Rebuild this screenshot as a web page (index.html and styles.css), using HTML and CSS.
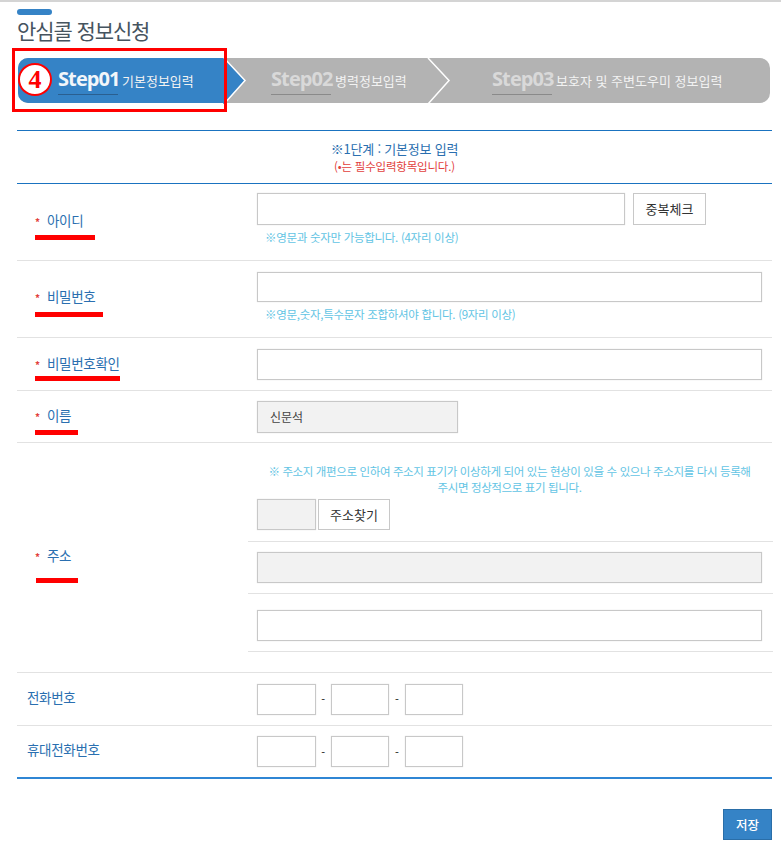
FILE: index.html
```html
<!DOCTYPE html>
<html lang="ko">
<head>
<meta charset="utf-8">
<title>안심콜 정보신청</title>
<link rel="stylesheet" href="styles.css">
</head>
<body>
<div class="page">
  <div class="title-mark"></div>
  <h1 class="title">안심콜 정보신청</h1>

  <div class="steps">
    <div class="step step-1">
      <span class="step-no">Step01</span><span class="step-label">기본정보입력</span>
      <svg class="chev chev-blue" width="24" height="46" viewBox="0 0 24 46"><path d="M1 0 L22 22.500 L1 46 L0 46 L0 0 Z" fill="#3583c6"/><path d="M1 0 L22 22.500 L1 46" fill="none" stroke="#fff" stroke-width="1.500"/></svg>
    </div>
    <div class="step step-2">
      <span class="step-no">Step02</span><span class="step-label">병력정보입력</span>
      <svg class="chev" width="24" height="46" viewBox="0 0 24 46"><path d="M1 0 L22 22.500 L1 46" fill="none" stroke="#fff" stroke-width="1.500"/></svg>
    </div>
    <div class="step step-3">
      <span class="step-no">Step03</span><span class="step-label">보호자 및 주변도우미 정보입력</span>
    </div>
    <div class="callout"></div>
    <div class="callout-num">4</div>
  </div>

  <div class="form">
    <div class="form-head">
      <p class="head-main">※1단계 : 기본정보 입력</p>
      <p class="head-sub">(•는 필수입력항목입니다.)</p>
    </div>

    <div class="row row-id">
      <div class="label req">아이디<i class="ul ul-id"></i></div>
      <div class="field field-id">
        <div class="line"><input class="input w-368" type="text"><button class="btn btn-check" type="button">중복체크</button></div>
        <p class="hint">※영문과 숫자만 가능합니다. (4자리 이상)</p>
      </div>
    </div>

    <div class="row row-pw">
      <div class="label req">비밀번호<i class="ul ul-pw"></i></div>
      <div class="field field-pw">
        <input class="input w-full h-30" type="password">
        <p class="hint">※영문,숫자,특수문자 조합하셔야 합니다. (9자리 이상)</p>
      </div>
    </div>

    <div class="row row-pw2">
      <div class="label req">비밀번호확인<i class="ul ul-pw2"></i></div>
      <div class="field"><input class="input w-full h-31" type="password"></div>
    </div>

    <div class="row row-name">
      <div class="label req">이름<i class="ul ul-name"></i></div>
      <div class="field"><input class="input input-off w-201" type="text" value="신문석" readonly></div>
    </div>

    <div class="row row-addr">
      <div class="label req">주소<i class="ul ul-addr"></i></div>
      <div class="addr">
        <div class="addr-row addr-top">
          <p class="addr-note">※ 주소지 개편으로 인하여 주소지 표기가 이상하게 되어 있는 현상이 있을 수 있으나 주소지를 다시 등록해<br>주시면 정상적으로 표기 됩니다.</p>
          <div class="line line-zip"><input class="input input-off w-59 h-31" type="text" readonly><button class="btn btn-zip" type="button">주소찾기</button></div>
        </div>
        <div class="addr-row addr-mid"><input class="input input-off w-full h-31" type="text" readonly></div>
        <div class="addr-row addr-end"><input class="input w-full h-31" type="text"></div>
      </div>
    </div>

    <div class="row row-tel">
      <div class="label">전화번호</div>
      <div class="field tel">
        <input class="input w-tel h-31" type="text"><span class="dash">-</span><input class="input w-tel h-31" type="text"><span class="dash">-</span><input class="input w-tel h-31" type="text">
      </div>
    </div>

    <div class="row row-tel row-last">
      <div class="label">휴대전화번호</div>
      <div class="field tel">
        <input class="input w-tel h-31" type="text"><span class="dash">-</span><input class="input w-tel h-31" type="text"><span class="dash">-</span><input class="input w-tel h-31" type="text">
      </div>
    </div>
  </div>

  <div class="actions"><button class="save" type="button">저장</button></div>
</div>
</body>
</html>
```

FILE: styles.css
```css
* { box-sizing: border-box; }
html, body { margin: 0; padding: 0; background: #fff; }
body {
  font-family: "Noto Sans CJK KR", "Noto Sans", sans-serif;
  color: #333;
  border-top: 2px solid #d4d4d4;
  overflow: hidden;
  height: 844px;
}
p { margin: 0; }
.page { width: 755px; margin-left: 17px; }

.title-mark { width: 35px; height: 6px; margin-top: 7px; background: #3583c6; border-radius: 3px; }
.title {
  margin: -1px 0 0;
  height: 34px;
  font-size: 21px;
  line-height: 32px;
  font-weight: 400;
  color: #46545f;
  letter-spacing: -1.1px;
}

.steps {
  position: relative;
  display: flex;
  width: 752px;
  height: 45px;
  margin: 10px 0 0 1px;
  background: #b3b3b3;
  border-radius: 10px;
}
.step { position: relative; display: flex; align-items: center; height: 45px; }
.step-1 { width: 207px; padding-left: 40px; background: #3583c6; border-radius: 10px 0 0 10px; }
.step-2 { width: 204px; padding-left: 46px; }
.step-3 { flex: 1; padding-left: 63px; }
.step-no {
  width: 60px;
  padding-bottom: 3px;
  border-bottom: 1px solid #8a8a8a;
  font-family: "Open Sans", "Noto Sans", sans-serif;
  font-size: 20px;
  line-height: 25px;
  font-weight: 700;
  letter-spacing: -0.9px;
  color: #d9d9d9;
}
.step-1 .step-no { color: #f2f6fa; border-bottom-color: #2a5f90; }
.step-label {
  margin-left: 4px;
  font-size: 13px;
  line-height: 20px;
  letter-spacing: 0;
  color: #f2f2f2;
  white-space: nowrap;
}
.chev { position: absolute; right: -22px; top: 0; }

.callout {
  position: absolute;
  left: -6px;
  top: -10px;
  width: 215px;
  height: 64px;
  border: 3px solid #f00;
}
.callout-num {
  position: absolute;
  left: 0;
  top: 5px;
  width: 34px;
  height: 33px;
  border: 2px solid #f00;
  border-radius: 50%;
  background: #fff;
  color: #f00;
  font-family: "Liberation Serif", serif;
  font-size: 26px;
  line-height: 29px;
  font-weight: 700;
  text-align: center;
}

.form { margin-top: 27px; border-top: 1px solid #1a73c0; }
.form-head { height: 53px; padding-top: 9px; text-align: center; border-bottom: 1px solid #1a73c0; }
.head-main { font-size: 13px; line-height: 18px; font-weight: 400; color: #2a6fb0; letter-spacing: -0.2px; }
.head-sub { font-size: 11.500px; line-height: 16px; color: #e2403c; letter-spacing: -0.2px; }

.row { display: flex; align-items: center; border-bottom: 1px solid #e2e2e2; }
.row-id { height: 77px; }
.row-pw { height: 77px; }
.row-pw2 { height: 53px; }
.row-name { height: 52px; }
.row-addr { height: 230px; }
.row-tel { height: 53px; }
.row-last { height: 53px; border-bottom: 2px solid #2f86d4; }

.label {
  position: relative;
  width: 240px;
  flex: none;
  padding-left: 10px;
  font-size: 13.500px;
  line-height: 20px;
  color: #2a6fb0;
  letter-spacing: -0.3px;
}
.label.req { padding-left: 30px; }
.label.req::before {
  content: "*";
  position: absolute;
  left: 18px;
  top: 2px;
  font-size: 10px;
  font-weight: 700;
  color: #e2403c;
}
.row-id .label, .row-name .label, .row-tel .label { padding-bottom: 4px; }
.row-pw .label, .row-addr .label { padding-bottom: 6px; }
.row-pw2 .label { padding-bottom: 2px; }
.row-last .label { padding-bottom: 6px; }

.ul { position: absolute; left: 18px; height: 5px; background: #f00; }
.ul-id { top: 25px; width: 60px; }
.ul-pw { top: 26px; width: 68px; }
.ul-pw2 { top: 23px; width: 85px; }
.ul-name { top: 25px; width: 43px; }
.ul-addr { top: 33px; width: 42px; left: 19px; }

.field { flex: 1; }
.field-id { align-self: flex-start; padding-top: 9px; }
.field-pw { align-self: flex-start; padding-top: 11px; }
.line { display: flex; }
.input {
  display: block;
  height: 32px;
  padding: 0 12px;
  border: 1px solid #c8c8c8;
  box-shadow: 0 0 1px #d8d8d8;
  background: #fff;
  font: 12px/20px "Noto Sans CJK KR", sans-serif;
  color: #444;
  outline: none;
}
.input-off { background: #f2f2f2; }
.w-368 { width: 368px; }
.w-full { width: 505px; }
.w-201 { width: 201px; }
.w-59 { width: 59px; padding: 0; }
.w-tel { width: 58.500px; padding: 0; }
.h-30 { height: 30px; }
.h-31 { height: 31px; }

.btn {
  height: 32px;
  padding: 0;
  border: 1px solid #c8c8c8;
  background: #fff;
  font: 13px/20px "Noto Sans CJK KR", sans-serif;
  color: #333;
  letter-spacing: 0;
}
.btn-check { width: 73px; margin-left: 8px; }
.hint { margin-top: 4px; padding-left: 8px; font-size: 11.500px; line-height: 17px; color: #62c4e4; letter-spacing: -0.3px; }

.addr { width: 525px; flex: none; margin-left: -9px; align-self: flex-start; }
.addr-row { padding-left: 9px; padding-right: 10px; border-bottom: 1px solid #e2e2e2; }
.addr-top { height: 99px; padding-top: 20px; }
.addr-mid { height: 52px; padding-top: 10px; }
.addr-end { height: 58px; padding-top: 16px; }
.addr-note { width: 505px; font-size: 11.500px; line-height: 16px; text-align: center; color: #62c4e4; letter-spacing: -0.38px; }
.line-zip { margin-top: 4px; }
.btn-zip { width: 72px; height: 31px; margin-left: 2px; }

.tel { display: flex; align-items: center; }
.dash { width: 15.300px; text-align: center; font-size: 11px; color: #111; }

.actions { display: flex; justify-content: flex-end; margin-top: 30px; }
.save {
  width: 49px;
  height: 31px;
  padding: 0;
  border: 1px solid #2a6ea8;
  background: #3583c6;
  color: #fff;
  font: 500 12.500px/20px "Noto Sans CJK KR", sans-serif;
}
```
